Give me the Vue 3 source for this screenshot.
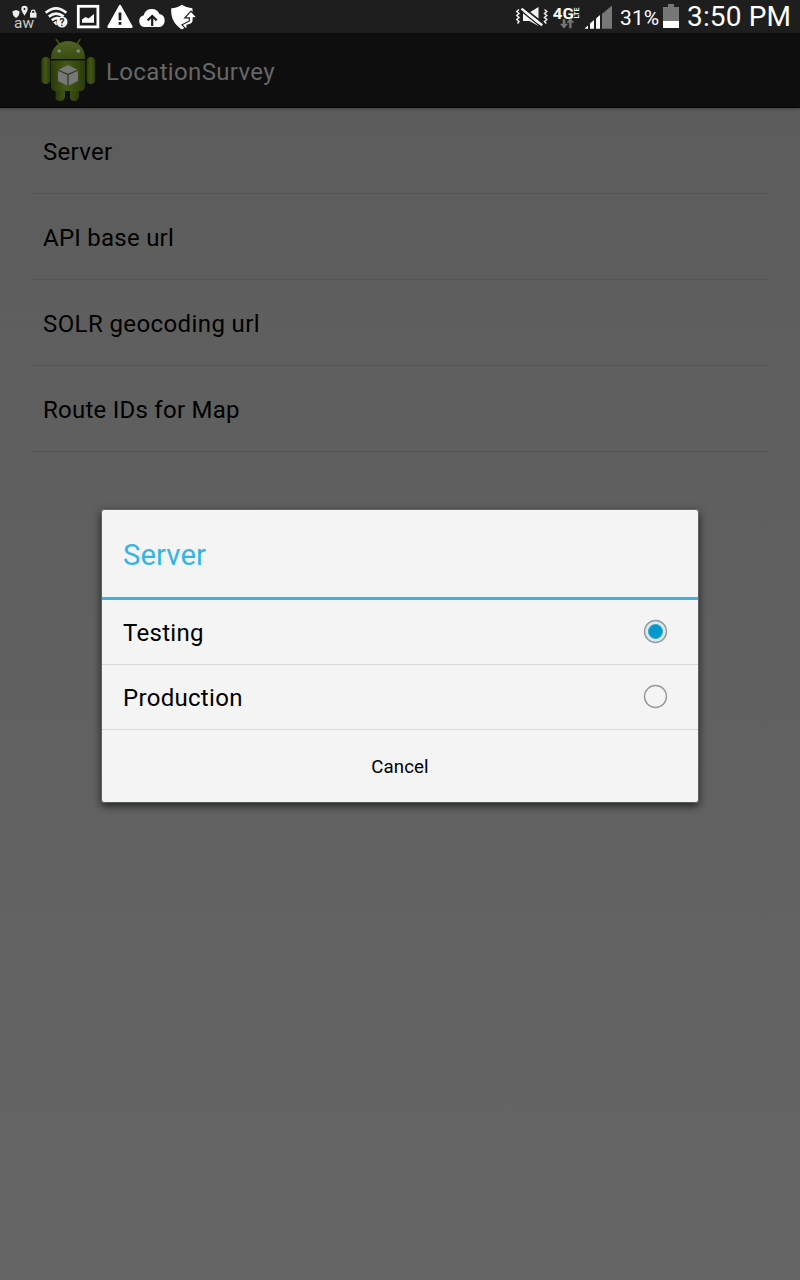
<script setup>
const settings = [
  { label: 'Server', cls: 'r1' },
  { label: 'API base url', cls: 'r2' },
  { label: 'SOLR geocoding url', cls: 'r3' },
  { label: 'Route IDs for Map', cls: 'r4' },
]
const options = [
  { label: 'Testing', checked: true },
  { label: 'Production', checked: false },
]
</script>

<template>
  <div class="screen">
    <header class="status">
      <div class="notifications">
        <svg width="32" height="33" viewBox="8 0 32 33">
          <path d="M12.5 11.3L16 10L19.5 11.3Q19.8 16 16 18Q12.2 16 12.5 11.3Z" fill="#eee" />
          <path d="M24.5 15.8Q21.3 11 21.3 9A3.2 3.2 0 0 1 27.7 9Q27.7 11 24.5 15.8Z" fill="#eee" />
          <circle cx="24.5" cy="9" r="1" fill="#1e1e1e" />
          <rect x="30" y="12.7" width="6.5" height="5" fill="#eee" />
          <path d="M31.4 13V12A1.8 1.8 0 0 1 35 12V13" fill="none" stroke="#eee" stroke-width="1.3" />
          <text x="14" y="27.5" textLength="20" lengthAdjust="spacingAndGlyphs" font-size="14.5" fill="#ccc">aw</text>
        </svg>
        <svg width="32" height="33" viewBox="40 0 32 33">
          <g fill="none" stroke="#f4f4f4" stroke-width="2.7">
            <path d="M45.7 12.8Q56 4 66.3 12.8" />
            <path d="M48.8 16.6Q56 10.6 63.6 16.4" />
            <path d="M51.8 20.3Q55 17.3 59 18.4" />
          </g>
          <path d="M53.2 22.4L56 21L57 25L56 25.3Z" fill="#f4f4f4" />
          <circle cx="62" cy="22" r="5.5" fill="#f4f4f4" />
          <text x="62" y="25.6" text-anchor="middle" font-size="10" font-weight="700" fill="#222">?</text>
        </svg>
        <svg width="32" height="33" viewBox="72 0 32 33">
          <rect x="78.3" y="6.3" width="19.6" height="20.6" fill="none" stroke="#fff" stroke-width="2.8" />
          <path d="M82 22.7V19.5L85.5 17L88.5 18.5L94 14V22.7Z" fill="#fff" />
        </svg>
        <svg width="32" height="33" viewBox="104 0 32 33">
          <path d="M120 6L131.5 26.8H108.5Z" fill="#fff" stroke="#fff" stroke-width="2.4" stroke-linejoin="round" />
          <rect x="118.6" y="12.5" width="2.8" height="7.8" fill="#1e1e1e" />
          <rect x="118.6" y="22" width="2.8" height="2.8" fill="#1e1e1e" />
        </svg>
        <svg width="32" height="33" viewBox="136 0 32 33">
          <path d="M145 27A6 6 0 0 1 143.7 15.2A8.3 8.3 0 0 1 159.4 14A6.6 6.6 0 0 1 159 27Z" fill="#fff" />
          <path d="M152.2 26V17.2M147.7 20.4L152.2 16L156.7 20.4" fill="none" stroke="#1e1e1e" stroke-width="2.2" />
        </svg>
        <svg width="32" height="33" viewBox="168 0 32 33">
          <path d="M171.3 8.2Q177 8.3 181.8 4.8Q187 8.3 192.4 8.2Q193.6 22 182 29.5Q170 22 171.3 8.2Z" fill="#fff" />
          <path d="M187 29.8L182 24.8L189.3 21V17.8H184.8L191 11.2L197.2 17.8H193.2V20.5Q193 24.2 187 25.3Z" fill="#fff" stroke="#1e1e1e" stroke-width="1.2" />
        </svg>
      </div>
      <div class="indicators">
        <svg class="sys" width="108" height="33" viewBox="505 0 108 33">
          <g fill="none" stroke="#eee" stroke-width="1.5">
            <path d="M519 9.5L516.8 11.5L519 13.5L516.8 15.5L519 17.5L516.8 19.5L519 21.5L517.5 23.5" />
            <path d="M544.5 9.5L546.8 11.5L544.5 13.5L546.8 15.5L544.5 17.5L546.8 19.5L544.5 21.5L546.3 23.5" />
          </g>
          <path d="M523 12.5H529.5L538.5 7V26L529.5 21H523Z" fill="#f4f4f4" />
          <path d="M522.5 7L543.5 23.8" stroke="#1e1e1e" stroke-width="2" />
          <path d="M520.2 10.3L541 27" stroke="#1e1e1e" stroke-width="1.4" />
          <path d="M521.5 8.6L542.2 25.3" stroke="#f4f4f4" stroke-width="2.4" />
          <text x="552.8" y="18.6" textLength="21" lengthAdjust="spacingAndGlyphs" font-size="15.5" font-weight="700" fill="#fff">4G</text>
          <text transform="translate(579.2 18.6) rotate(-90)" textLength="11" lengthAdjust="spacingAndGlyphs" font-size="6.8" font-weight="700" fill="#fff">LTE</text>
          <path d="M563 19.3H565V24H567.5L564 28.3L560.5 24H563ZM569.3 28V22.5H566.8L570.3 18.5L573.8 22.5H571.3V28Z" fill="#777" stroke="#777" stroke-width=".5" />
          <path d="M585 28.7V28L588 25.5V28.7ZM590 28.7V23.5L594 20V28.7ZM596 28.7V18.5L600 15V28.7Z" fill="#fff" />
          <path d="M602 28.7V14L612 5.5V28.7Z" fill="#777" />
        </svg>
        <span class="percent">31%</span>
        <svg class="battery" width="16" height="33" viewBox="663 0 16 33">
          <path d="M663 7H668V4H674V7H679V21H663Z" fill="#777" />
          <rect x="663" y="21" width="16" height="7" fill="#fff" />
        </svg>
        <span class="clock">3:50 PM</span>
      </div>
    </header>

    <div class="appbar">
      <svg class="robot" width="64" height="64" viewBox="0 0 64 64">
        <defs>
          <linearGradient id="limb" x1="0" x2="1">
            <stop offset="0" stop-color="#2c3a0c" />
            <stop offset=".45" stop-color="#435813" />
            <stop offset="1" stop-color="#2d3c0b" />
          </linearGradient>
          <linearGradient id="head" x1="0" x2="0" y1="0" y2="1">
            <stop offset="0" stop-color="#52622a" />
            <stop offset="1" stop-color="#3a4e0e" />
          </linearGradient>
        </defs>
        <path d="M20.3 2.5L24.2 8.2M44 2.5L40 8.2" stroke="#40550f" stroke-width="1.6" stroke-linecap="round" />
        <rect x="5.3" y="20" width="9" height="27" rx="4.3" fill="url(#limb)" />
        <rect x="50.5" y="20" width="8.7" height="27" rx="4.3" fill="url(#limb)" />
        <path d="M19.5 49H29V60Q28 64 24 64Q19.5 64 19.5 60ZM34 49H43V60Q42 64 38.5 64Q34 64 34 60Z" fill="url(#limb)" />
        <path d="M15 22Q15 13 21 8Q26 4 32 4Q38 4 43.5 8Q49 13 49 22Z" fill="url(#head)" />
        <path d="M15 23.5H49V49Q49 54 44 54H20Q15 54 15 49Z" fill="url(#limb)" />
        <circle cx="23.2" cy="14" r="1.8" fill="#858a78" />
        <circle cx="42.2" cy="14" r="1.8" fill="#858a78" />
        <path d="M32 28L42 33V44L32 49L22 44V33Z" fill="#777" />
        <path d="M22 33L32 37.5L42 33M32 37.5V49" fill="none" stroke="#2e3b16" stroke-width="1.2" />
      </svg>
      <h1>LocationSurvey</h1>
    </div>

    <ul class="settings">
      <li v-for="s in settings" :key="s.label"><span :class="s.cls">{{ s.label }}</span></li>
    </ul>

    <section class="dialog">
      <h2>Server</h2>
      <div v-for="o in options" :key="o.label" class="option">
        <span>{{ o.label }}</span>
        <svg width="26" height="26" viewBox="0 0 26 26">
          <circle cx="12.5" cy="12.5" r="11" :fill="o.checked ? '#d3ebf4' : 'none'" stroke="#999" stroke-width="1.4" />
          <circle v-if="o.checked" cx="12.5" cy="12.5" r="7" fill="#0099cc" stroke="#4a9dbb" stroke-width="1" />
        </svg>
      </div>
      <button class="cancel">Cancel</button>
    </section>
  </div>
</template>

<style>
body { margin: 0; background: #656565; }
</style>

<style scoped>
.screen {
  position: relative;
  width: 800px;
  height: 1280px;
  overflow: hidden;
  background: linear-gradient(#5c5c5c 0%, #656565 100%);
  font-family: Roboto, "Liberation Sans", sans-serif;
  color: #000;
}
.status {
  display: flex;
  justify-content: space-between;
  height: 33px;
  background: #1e1e1e;
  color: #fff;
}
.notifications { display: flex; padding-left: 8px; }
.indicators { display: flex; align-items: center; height: 33px; }
.indicators svg { flex: none; }
.percent { width: 43px; margin-left: 7px; padding-top: 3px; box-sizing: border-box; font-size: 21px; line-height: 33px; letter-spacing: .1px; white-space: nowrap; }
.clock { width: 113px; margin-left: 8px; font-size: 28px; line-height: 33px; letter-spacing: .15px; white-space: nowrap; }
.appbar {
  display: flex;
  align-items: center;
  box-sizing: border-box;
  height: 75px;
  padding-left: 36px;
  background: #0e0e0e;
  border-bottom: 1px solid #050505;
  box-shadow: 0 1px 3px rgba(0, 0, 0, .35);
}
.robot { margin: -3px 6px 0 0; }
h1 { margin: 3px 0 0; font-size: 24px; font-weight: 400; line-height: 30px; letter-spacing: .35px; color: #676767; }
.settings { margin: 0; padding: 0 32px; list-style: none; }
.settings li {
  height: 85px;
  padding-left: 11px;
  border-bottom: 1px solid #545454;
  font-size: 24px;
  line-height: 89px;
}
.r1 { letter-spacing: .3px; }
.r2 { letter-spacing: .25px; }
.r3 { letter-spacing: .4px; }
.r4 { letter-spacing: .25px; }
.dialog {
  position: absolute;
  left: 102px;
  top: 510px;
  width: 596px;
  height: 292px;
  border-radius: 2px;
  background: #f4f4f4;
  box-shadow: 0 0 0 1px rgba(120, 130, 130, .5), 0 3px 9px 1px rgba(0, 0, 0, .65);
}
h2 {
  box-sizing: border-box;
  height: 90px;
  margin: 0;
  padding-left: 21px;
  border-bottom: 3px solid #33b5e5;
  color: #33b5e5;
  font-size: 29.3px;
  font-weight: 400;
  line-height: 90px;
  letter-spacing: .08px;
}
.option {
  display: flex;
  align-items: center;
  justify-content: space-between;
  box-sizing: border-box;
  height: 65px;
  padding: 0 29px 0 21px;
  border-bottom: 1px solid #d8d8d8;
  font-size: 24px;
  letter-spacing: .3px;
}
.option span { padding-top: 2px; }
.option svg { margin-top: -1px; }
.cancel {
  display: block;
  width: 100%;
  height: 72px;
  padding: 2px 0 0;
  border: 0;
  background: none;
  font-family: inherit;
  font-size: 18.7px;
  letter-spacing: .1px;
  color: #000;
}
</style>
